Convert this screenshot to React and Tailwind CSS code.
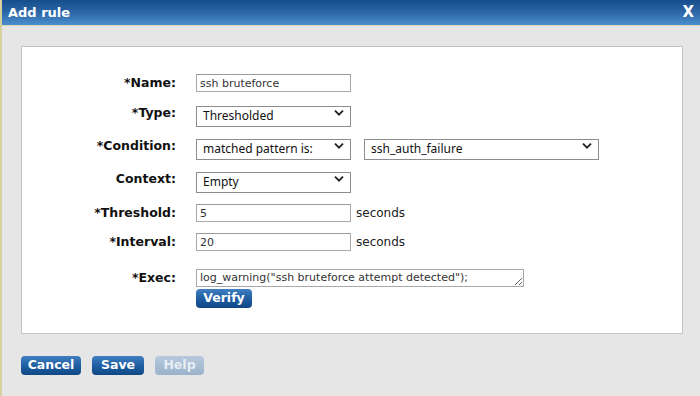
const labelFont = { fontFamily: '"DejaVu Sans", Verdana, sans-serif' }

function Chevron() {
  return (
    <svg className="pointer-events-none absolute right-[7px] top-1/2 -translate-y-1/2" width="10" height="7" viewBox="0 0 10 7">
      <path d="M1 1.2 L5 5.2 L9 1.2" fill="none" stroke="#222" strokeWidth="1.8" />
    </svg>
  )
}

function Select({ value, width }) {
  return (
    <div className={`relative ${width} h-[21px]`}>
      <select
        defaultValue={value}
        className="appearance-none w-full h-full border border-[#8d8d8d] bg-white pl-[6px] text-[12px] text-[#111] font-['Noto_Sans',sans-serif] outline-none"
      >
        <option>{value}</option>
      </select>
      <Chevron />
    </div>
  )
}

function TextInput({ value, width = 'w-[155px]' }) {
  return (
    <input
      defaultValue={value}
      className={`${width} h-[18px] border border-[#a9a9a9] border-t-[#9a9a9a] bg-white px-[3px] text-[11px] text-[#333] font-['DejaVu_Sans',sans-serif] outline-none`}
    />
  )
}

function Row({ label, children, className = '' }) {
  return (
    <div className={`flex items-center ${className}`}>
      <div className="w-[154px] text-right text-[12.5px] leading-[16px] font-bold text-[#111]" style={labelFont}>
        {label}
      </div>
      <div className="ml-[20px] flex items-center">{children}</div>
    </div>
  )
}

function BlueButton({ children, disabled, className = '' }) {
  return (
    <button
      className={`h-[19px] rounded-[4px] text-[12.5px] font-bold ${
        disabled
          ? 'bg-gradient-to-b from-[#b7c9dd] to-[#9bb2cc] text-[#e8eef5]'
          : 'bg-gradient-to-b from-[#3f7fc1] via-[#1f5fa3] to-[#0f4785] text-white'
      } ${className}`}
      style={labelFont}
    >
      {children}
    </button>
  )
}

export default function App() {
  return (
    <div className="w-[700px] h-[396px] bg-[#e6e6e6] border-l-2 border-[#d8cf9e] flex flex-col overflow-hidden">
      <div className="h-[26px] bg-gradient-to-b from-[#164d8c] via-[#2c67a8] to-[#4b8fce] flex items-center justify-between pl-[6px] pr-[6px] border-b border-[#d9d3b4]">
        <span className="text-white font-bold text-[13px]" style={labelFont}>Add rule</span>
        <span className="text-white font-bold text-[15px]" style={labelFont}>X</span>
      </div>

      <div className="mt-[20px] ml-[19px] w-[662px] h-[288px] bg-white border border-[#c4c4c4] flex flex-col pt-[27px]">
        <Row label="*Name:">
          <TextInput value="ssh bruteforce" />
        </Row>
        <Row label="*Type:" className="mt-[10px]">
          <Select value="Thresholded" width="w-[155px]" />
        </Row>
        <Row label="*Condition:" className="mt-[12px]">
          <Select value="matched pattern is:" width="w-[155px]" />
          <div className="ml-[13px]">
            <Select value="ssh_auth_failure" width="w-[235px]" />
          </div>
        </Row>
        <Row label="Context:" className="mt-[12px]">
          <Select value="Empty" width="w-[155px]" />
        </Row>
        <Row label="*Threshold:" className="mt-[15px]">
          <TextInput value="5" />
          <span className="ml-[5px] text-[12px] text-[#222]" style={labelFont}>seconds</span>
        </Row>
        <Row label="*Interval:" className="mt-[11px]">
          <TextInput value="20" />
          <span className="ml-[5px] text-[12px] text-[#222]" style={labelFont}>seconds</span>
        </Row>
        <div className="flex items-start mt-[18px]">
          <div className="w-[154px] text-right text-[12.5px] leading-[16px] font-bold text-[#111] pt-[1px]" style={labelFont}>
            *Exec:
          </div>
          <div className="ml-[20px] flex flex-col items-start">
            <textarea
              defaultValue={'log_warning("ssh bruteforce attempt detected");'}
              className="block w-[328px] h-[18px] border border-[#a9a9a9] bg-white px-[3px] text-[11px] leading-[15px] text-[#333] font-['DejaVu_Sans',sans-serif] outline-none overflow-hidden"
            />
            <BlueButton className="w-[56px] mt-[2px]">Verify</BlueButton>
          </div>
        </div>
      </div>

      <div className="flex items-center mt-[22px] ml-[19px] gap-[11px]">
        <BlueButton className="w-[60px]">Cancel</BlueButton>
        <BlueButton className="w-[52px]">Save</BlueButton>
        <BlueButton className="w-[49px]" disabled>Help</BlueButton>
      </div>
    </div>
  )
}
